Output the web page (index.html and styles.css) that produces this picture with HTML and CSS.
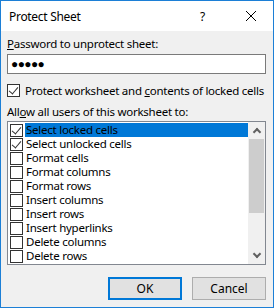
FILE: index.html
```html
<!DOCTYPE html>
<html lang="en">
<head>
    <meta charset="UTF-8">
    <title>Protect Sheet</title>
    <link rel="stylesheet" href="styles.css">
</head>
<body>
    <div class="dialog">
        <div class="titlebar">
            <span class="title">Protect Sheet</span>
            <span class="help">?</span>
            <span class="close">
                <svg width="12" height="12" viewBox="0 0 12 12">
                    <path d="M1 1 L11 11 M11 1 L1 11" stroke="#000" stroke-width="1" fill="none"/>
                </svg>
            </span>
        </div>

        <div class="content">
            <div class="label first"><u>P</u>assword to unprotect sheet:</div>
            <div class="password">&#9679;&#9679;&#9679;&#9679;&#9679;</div>

            <label class="check-row">
                <span class="box checked"></span>
                <span>Protect worksheet and <u>c</u>ontents of locked cells</span>
            </label>

            <div class="label">All<u>o</u>w all users of this worksheet to:</div>

            <div class="listbox">
                <div class="items" id="items"></div>
                <div class="scrollbar">
                    <span class="arrow up"></span>
                    <div class="track"><div class="thumb"></div></div>
                    <span class="arrow down"></span>
                </div>
            </div>

            <div class="buttons">
                <button class="btn default">OK</button>
                <button class="btn">Cancel</button>
            </div>
        </div>
    </div>

    <script>
        const options = [
            { text: "Select locked cells", checked: true, selected: true },
            { text: "Select unlocked cells", checked: true },
            { text: "Format cells" },
            { text: "Format columns" },
            { text: "Format rows" },
            { text: "Insert columns" },
            { text: "Insert rows" },
            { text: "Insert hyperlinks" },
            { text: "Delete columns" },
            { text: "Delete rows" }
        ];

        const list = document.getElementById('items');
        options.forEach(opt => {
            const row = document.createElement('div');
            row.className = 'item';
            row.innerHTML = `
                <span class="box ${opt.checked ? 'checked' : ''}"></span>
                <span class="item-text ${opt.selected ? 'selected' : ''}">${opt.text}</span>
            `;
            list.appendChild(row);
        });
    </script>
</body>
</html>
```

FILE: styles.css
```css
body {
    margin: 0;
    font-family: "Noto Sans", "Open Sans", sans-serif;
    font-size: 11.5px;
    letter-spacing: -0.25px;
    color: #000;
    white-space: nowrap;
}

.dialog {
    width: 274px;
    height: 308px;
    box-sizing: border-box;
    border: 1px solid #1c7fd6;
    background-color: #f0f0f0;
    display: flex;
    flex-direction: column;
}

.titlebar {
    height: 30px;
    background-color: #fff;
    display: flex;
    align-items: center;
    padding-left: 8px;
    font-size: 12px;
    letter-spacing: -0.3px;
}

.title {
    flex: 1;
}

.help {
    width: 10px;
    margin-right: 35px;
}

.close {
    width: 12px;
    height: 12px;
    margin-right: 16px;
    display: flex;
}

.content {
    padding: 0 7px 0 6px;
    display: flex;
    flex-direction: column;
}

.label {
    height: 16px;
    line-height: 16px;
    margin-top: 6px;
}

.label.first {
    margin-top: 5px;
}

.password {
    height: 20px;
    margin-top: 2px;
    box-sizing: border-box;
    border: 1px solid #7a7a7a;
    background-color: #fff;
    line-height: 17px;
    padding-left: 3px;
    font-size: 12px;
    letter-spacing: -0.6px;
}

.check-row {
    display: flex;
    align-items: center;
    gap: 5px;
    height: 16px;
    margin-top: 8px;
}

.box {
    width: 13px;
    height: 13px;
    box-sizing: border-box;
    border: 1px solid #333;
    background-color: #fff;
    flex-shrink: 0;
    position: relative;
}

.box.checked::after {
    content: '';
    position: absolute;
    left: 3px;
    top: 0px;
    width: 4px;
    height: 8px;
    border-right: 1px solid #333;
    border-bottom: 1px solid #333;
    transform: rotate(40deg);
    transform-origin: center;
}

.listbox {
    margin-top: 1px;
    height: 144px;
    box-sizing: border-box;
    border: 1px solid #828790;
    background-color: #fff;
    display: flex;
    padding: 1px 0 0 2px;
}

.items {
    flex: 1;
}

.item {
    height: 14px;
    display: flex;
    align-items: center;
    gap: 2px;
}

.item-text {
    flex: 1;
    line-height: 14px;
    height: 14px;
    padding-left: 1px;
}

.item-text.selected {
    background-color: #0078d7;
    color: #000;
}

.scrollbar {
    width: 17px;
    background-color: #f0f0f0;
    margin-top: -1px;
    display: flex;
    flex-direction: column;
    align-items: center;
}

.arrow {
    height: 17px;
    width: 17px;
    position: relative;
}

.arrow::after {
    content: '';
    position: absolute;
    left: 6px;
    width: 4px;
    height: 4px;
    border-left: 2px solid #606060;
    border-top: 2px solid #606060;
}

.arrow.up::after {
    top: 7px;
    transform: rotate(45deg);
}

.arrow.down::after {
    top: 4px;
    transform: rotate(225deg);
}

.track {
    flex: 1;
    width: 100%;
}

.thumb {
    margin: 0 auto;
    width: 15px;
    height: 74px;
    background-color: #cdcdcd;
}

.buttons {
    display: flex;
    justify-content: flex-end;
    gap: 10px;
    margin-top: 12px;
}

.btn {
    width: 74px;
    height: 23px;
    font-family: "Noto Sans", "Open Sans", sans-serif;
    font-size: 12px;
    background-color: #e1e1e1;
    border: 1px solid #adadad;
    padding: 0;
    color: #000;
}

.btn.default {
    border: 2px solid #0078d7;
}
```
